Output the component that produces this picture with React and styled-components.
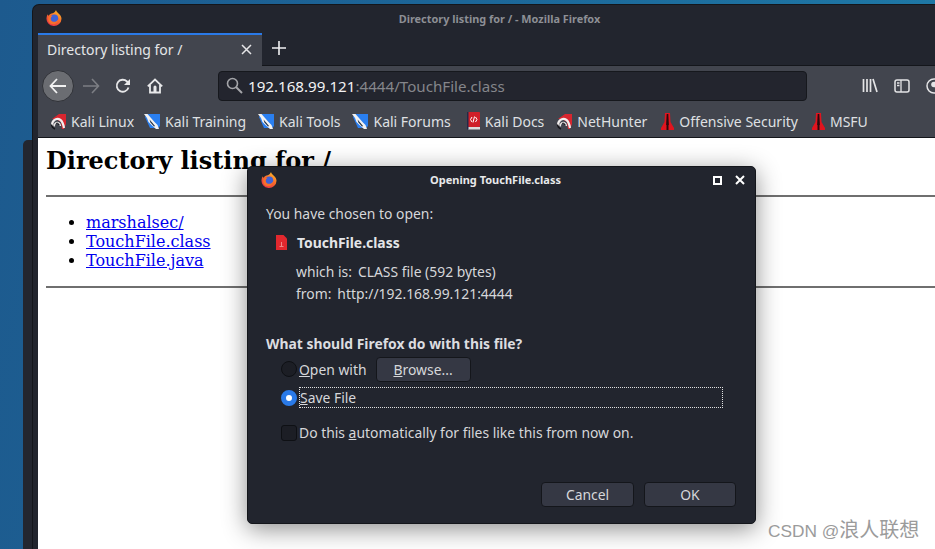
import React from 'react'
import styled, { createGlobalStyle } from 'styled-components'

const ui = `"Noto Sans", "Open Sans", sans-serif`

const FirefoxIcon = ({ id }) => (
  <svg width="16" height="16" viewBox="0 0 16 16">
    <defs>
      <linearGradient id={id} x1="0.8" y1="0" x2="0.2" y2="1">
        <stop offset="0" stopColor="#ffc02a" />
        <stop offset="0.5" stopColor="#f7662a" />
        <stop offset="1" stopColor="#e62f4c" />
      </linearGradient>
    </defs>
    <path d="M10 0c.3 1.500 1.300 2.200 2.300 3.200C14.200 4.800 15.500 6.500 15.500 8.700A7.500 7.300 0 1 1 .6 7.500c.1-1.300.5-2.400 1.100-3.200.1.700.4 1.200.9 1.500C3.500 4.300 5 3.400 6.700 3.200 8.200 2.800 9.500 1.600 10 0z" fill={`url(#${id})`} />
    <circle cx="8.300" cy="8.300" r="3.900" fill="#3f62d8" />
    <path d="M2.600 6.800c1.500-1 3-1.200 4.300-.7-1.300.3-2.200 1.300-2.200 2.600 0 1.900 1.600 3.200 3.600 3.100 1.500 0 2.900-.9 3.700-2.300.2 2.600-2.200 4.800-4.800 4.800-3 0-5-2.200-5-4.600 0-1 .1-2 .4-2.900z" fill="#f6702b" />
  </svg>
)

const KaliRed = () => (
  <svg width="17" height="17" viewBox="0 0 17 17">
    <path d="M2 6 9 1h7v10l-2 5H12L11 9 6 6z" fill="#d8262f" />
    <path d="M2.500 13C1 8.500 6 4 10.500 7c2 1.400 2.700 3.500 3.500 8" fill="none" stroke="#f2eeee" strokeWidth="2.200" />
    <path d="M4.500 13.500c-1-2.800 2-5 4.500-3.500 1 .6 1.300 1.500 1.500 3" fill="none" stroke="#e8e4e4" strokeWidth="1.400" />
    <path d="M1.500 11.500c.2 2 1.500 3.800 3.500 4.500" fill="none" stroke="#15151a" strokeWidth="1.500" />
    <path d="M6 10.500c1.200-.8 2.500-.3 3 1.500" fill="none" stroke="#15151a" strokeWidth="1" />
  </svg>
)

const KaliBlue = () => (
  <svg width="17" height="17" viewBox="0 0 17 17">
    <path d="M3 1h13v12l-2 2H6L1 4z" fill="#2a7ff0" />
    <path d="M0 1h3.500l3.500 4 3.500 4 3 3 1.500 4h-3L7.500 12 4.500 9 3 5z" fill="#f2f2f2" />
    <path d="M5.500 6.500l3 3.500 2.500 3-1 .5-3.500-4z" fill="#1a2a40" />
  </svg>
)

const KaliDoc = () => (
  <svg width="18" height="18" viewBox="-3 0 18 18">
    <rect x="1" y="0" width="13" height="15" rx="1" fill="#cf2029" />
    <rect x="2" y="15" width="12" height="2.500" fill="#dcdcdc" />
    <rect x="1" y="0" width="1.500" height="17.500" fill="#222a4a" />
    <path d="M6 5 4.500 7.500 6 10M9.500 5 11 7.500 9.500 10" fill="none" stroke="#fff" strokeWidth="1" />
    <path d="M8.500 4.500 7 10.500" stroke="#fff" strokeWidth="1" />
  </svg>
)

const Rocket = () => (
  <svg width="16" height="19" viewBox="-1 0 16 19">
    <path d="M5 1h5l.5 9 3.500 6v2H1v-2l3.500-6z" fill="#e0141e" />
    <path d="M6.700 2h1.600l.6 11H6.100zM6.500 13h2v5h-2z" fill="#2a0a0e" />
  </svg>
)

const FileIcon = () => (
  <svg width="11" height="15" viewBox="0 0 11 15">
    <path d="M0 0h7.500L11 3.500V15H0z" fill="#e2282e" />
    <path d="M5.500 7v4M3.500 11.500h4" stroke="#f08888" strokeWidth="1" />
  </svg>
)

const bookmarks = [
  { label: 'Kali Linux', icon: <KaliRed /> },
  { label: 'Kali Training', icon: <KaliBlue /> },
  { label: 'Kali Tools', icon: <KaliBlue /> },
  { label: 'Kali Forums', icon: <KaliBlue /> },
  { label: 'Kali Docs', icon: <KaliDoc /> },
  { label: 'NetHunter', icon: <KaliRed /> },
  { label: 'Offensive Security', icon: <Rocket /> },
  { label: 'MSFU', icon: <Rocket /> },
]

const App = () => {
  return (
    <>
      <Global />
      <Desktop>
        <BackWindow />
        <BrowserWindow>
          <TitleBar>
            <TitleIcon><FirefoxIcon id="fxMain" /></TitleIcon>
            Directory listing for / - Mozilla Firefox
          </TitleBar>
          <Inner>
            <TabStrip>
              <Tab>
                <span>Directory listing for /</span>
                <svg width="11" height="11" viewBox="0 0 11 11"><path d="M1 1l9 9M10 1l-9 9" stroke="#e6e6e8" strokeWidth="1.500" /></svg>
              </Tab>
              <NewTab>
                <svg width="14" height="14" viewBox="0 0 14 14"><path d="M7 0v14M0 7h14" stroke="#f0f0f2" strokeWidth="1.600" /></svg>
              </NewTab>
            </TabStrip>
            <NavBar>
              <BackButton>
                <svg width="18" height="16" viewBox="0 0 18 16"><path d="M8 1 1.500 8 8 15M2 8h15" fill="none" stroke="#f2f2f2" strokeWidth="1.800" /></svg>
              </BackButton>
              <NavIcon $left={8}>
                <svg width="18" height="16" viewBox="0 0 18 16"><path d="M10 1l6.500 7L10 15M16 8H1" fill="none" stroke="#7c7e84" strokeWidth="1.600" /></svg>
              </NavIcon>
              <NavIcon $left={15}>
                <svg width="16" height="16" viewBox="0 0 16 16"><path d="M13.500 9.500A6 6 0 1 1 12 3.500L14 5.500" fill="none" stroke="#e8e8ea" strokeWidth="1.800" /><path d="M15 1v6H9z" fill="#e8e8ea" /></svg>
              </NavIcon>
              <NavIcon $left={16}>
                <svg width="16" height="16" viewBox="0 0 16 16"><path d="M.8 8.300 8 1.500l7.200 6.800M3 7v7.500h10V7" fill="none" stroke="#e8e8ea" strokeWidth="1.800" /><path d="M8 7.500a1.500 1.500 0 0 1 1.500 1.500v5h-3V9A1.500 1.500 0 0 1 8 7.500z" fill="#e8e8ea" /></svg>
              </NavIcon>
              <UrlBar>
                <svg width="17" height="17" viewBox="0 0 17 17"><circle cx="6.500" cy="6.500" r="5" fill="none" stroke="#a4a5a9" strokeWidth="1.600" /><path d="M10 10l6 6" stroke="#a4a5a9" strokeWidth="2" /></svg>
                <UrlText>192.168.99.121<UrlDim>:4444/TouchFile.class</UrlDim></UrlText>
              </UrlBar>
              <NavRight>
                <svg width="16" height="15" viewBox="0 0 16 15"><path d="M1.500 1v13M5 1v13M8.500 1v13M11 1l4 13" stroke="#e4e4e6" strokeWidth="1.700" fill="none" /></svg>
                <svg width="16" height="14" viewBox="0 0 16 14"><rect x="1" y="1" width="14" height="12" rx="2" fill="none" stroke="#e4e4e6" strokeWidth="1.500" /><path d="M7 1v12M3 4h2.500M3 6.500h2.500" stroke="#e4e4e6" strokeWidth="1.300" /></svg>
                <svg width="16" height="16" viewBox="0 0 16 16"><circle cx="8" cy="8" r="7" fill="none" stroke="#e4e4e6" strokeWidth="1.500" /><circle cx="8" cy="6.500" r="2.800" fill="#e4e4e6" /></svg>
              </NavRight>
            </NavBar>
            <BookmarkBar>
              {bookmarks.map((b) => (
                <Bookmark key={b.label}>
                  {b.icon}
                  <span>{b.label}</span>
                </Bookmark>
              ))}
            </BookmarkBar>
            <Page>
              <Heading>Directory listing for /</Heading>
              <Rule />
              <Listing>
                <li><a href="#marshalsec">marshalsec/</a></li>
                <li><a href="#class">TouchFile.class</a></li>
                <li><a href="#java">TouchFile.java</a></li>
              </Listing>
              <Rule />
            </Page>
          </Inner>
        </BrowserWindow>

        <Dialog>
          <DialogTitle>
            <DialogIcon><FirefoxIcon id="fxDialog" /></DialogIcon>
            Opening TouchFile.class
            <DialogControls>
              <svg width="9" height="9" viewBox="0 0 9 9"><rect x="1" y="1" width="7" height="7" fill="none" stroke="#fff" strokeWidth="2" /></svg>
              <svg width="10" height="10" viewBox="0 0 10 10"><path d="M1 1l8 8M9 1l-8 8" stroke="#fff" strokeWidth="2" /></svg>
            </DialogControls>
          </DialogTitle>
          <DialogBody>
            <div>You have chosen to open:</div>
            <FileRow>
              <FileIcon />
              <strong>TouchFile.class</strong>
            </FileRow>
            <FileMeta>
              <MetaRow><span>which is:</span><span>CLASS file (592 bytes)</span></MetaRow>
              <MetaRow><span>from:</span><span>http://192.168.99.121:4444</span></MetaRow>
            </FileMeta>
            <Question>What should Firefox do with this file?</Question>
            <OptionRow $height={32}>
              <Radio />
              <OptionLabel><u>O</u>pen with</OptionLabel>
              <BrowseButton><u>B</u>rowse...</BrowseButton>
            </OptionRow>
            <OptionRow $height={21} $top={2}>
              <Radio $checked />
              <FocusLabel><u>S</u>ave File</FocusLabel>
            </OptionRow>
            <CheckRow>
              <CheckBox />
              <OptionLabel>Do this <u>a</u>utomatically for files like this from now on.</OptionLabel>
            </CheckRow>
            <ButtonRow>
              <DialogButton $width={93}>Cancel</DialogButton>
              <DialogButton $width={92}>OK</DialogButton>
            </ButtonRow>
          </DialogBody>
        </Dialog>

        <Watermark>CSDN @<WatermarkName>浪人联想</WatermarkName></Watermark>
      </Desktop>
    </>
  )
}

export default App

const Global = createGlobalStyle`
  html, body {
    margin: 0;
    padding: 0;
    overflow: hidden;
  }
`

const Desktop = styled.div`
  position: relative;
  width: 935px;
  height: 549px;
  overflow: hidden;
  font-family: ${ui};
  background: linear-gradient(100deg, #1d5a8e 0%, #1c6698 45%, #1f7ba8 100%);
`

const BackWindow = styled.div`
  position: absolute;
  left: 23px;
  top: 140px;
  width: 20px;
  height: 409px;
  background: #23262f;
  border-radius: 5px 0 0 0;
`

const BrowserWindow = styled.div`
  position: absolute;
  left: 33px;
  top: 5px;
  width: 933px;
  height: 544px;
  background: #22252e;
  border-radius: 6px 0 0 0;
  display: flex;
  flex-direction: column;
  box-shadow: 0 0 0 1px #14161b;
`

const TitleBar = styled.div`
  position: relative;
  height: 28px;
  flex: none;
  display: flex;
  align-items: center;
  justify-content: center;
  padding-bottom: 2px;
  box-sizing: border-box;
  color: #8d8f95;
  font-size: 10.9px;
  font-weight: 700;
`

const TitleIcon = styled.div`
  position: absolute;
  left: 13px;
  top: 5px;
  line-height: 0;
`

const Inner = styled.div`
  flex: 1;
  display: flex;
  flex-direction: column;
  margin-left: 5px;
  min-height: 0;
`

const TabStrip = styled.div`
  height: 32px;
  flex: none;
  display: flex;
  align-items: stretch;
  border-bottom: 1px solid #14161b;
`

const Tab = styled.div`
  width: 224px;
  box-sizing: border-box;
  height: 33px;
  border-top: 2px solid #2a7ae8;
  background: #42454e;
  display: flex;
  align-items: center;
  justify-content: space-between;
  padding: 0 10px 3px 9px;
  color: #e4e5e8;
  font-size: 14px;
`

const NewTab = styled.div`
  width: 34px;
  display: flex;
  align-items: center;
  justify-content: center;
  padding-bottom: 2px;
`

const NavBar = styled.div`
  height: 39px;
  flex: none;
  display: flex;
  align-items: center;
  background: #42454e;
  padding-left: 4px;
`

const BackButton = styled.div`
  width: 32px;
  height: 32px;
  box-sizing: border-box;
  flex: none;
  border-radius: 50%;
  background: #6b6d72;
  border: 1px solid #303238;
  display: flex;
  align-items: center;
  justify-content: center;
`

const NavIcon = styled.div`
  margin-left: ${(p) => p.$left}px;
  line-height: 0;
  flex: none;
`

const UrlBar = styled.div`
  width: 589px;
  height: 30px;
  box-sizing: border-box;
  margin-left: 55px;
  flex: none;
  display: flex;
  align-items: center;
  gap: 5px;
  padding-left: 7px;
  background: #23252e;
  border: 1px solid #16181d;
  border-radius: 4px;
`

const UrlText = styled.div`
  color: #f2f2f4;
  font-size: 15.15px;
  line-height: 20px;
`

const UrlDim = styled.span`
  color: #85868b;
`

const NavRight = styled.div`
  margin-left: 55px;
  display: flex;
  align-items: center;
  gap: 16px;
  flex: none;
`

const BookmarkBar = styled.div`
  height: 33px;
  box-sizing: border-box;
  flex: none;
  display: flex;
  align-items: center;
  gap: 12px;
  padding-left: 12px;
  background: #42454e;
  border-bottom: 1px solid #14161b;
`

const Bookmark = styled.div`
  display: flex;
  align-items: center;
  gap: 4px;
  color: #dfe0e3;
  font-size: 14px;
  white-space: nowrap;
  &:first-child {
    margin-right: -2px;
  }
`

const Page = styled.div`
  flex: 1;
  background: #fff;
  padding: 0 8px;
  font-family: "DejaVu Serif", serif;
  font-size: 16px;
  color: #000;
`

const Heading = styled.h1`
  font-size: 24px;
  line-height: 28px;
  font-weight: 700;
  margin: 9px 0 20px;
`

const Rule = styled.hr`
  margin: 0;
  height: 2px;
  border: none;
  background: #6f6f6f;
`

const Listing = styled.ul`
  margin: 16px 0 16px;
  padding-left: 40px;
  line-height: 19px;
  a {
    color: #0000ee;
  }
`

const Dialog = styled.div`
  position: absolute;
  left: 247px;
  top: 166px;
  width: 509px;
  height: 358px;
  box-sizing: border-box;
  background: #22252e;
  border: 1px solid #14161b;
  border-radius: 5px;
  box-shadow: 0 5px 24px rgba(0, 0, 0, 0.45);
  color: #d6d7da;
  font-size: 13.9px;
  display: flex;
  flex-direction: column;
`

const DialogTitle = styled.div`
  position: relative;
  height: 27px;
  box-sizing: border-box;
  flex: none;
  display: flex;
  align-items: center;
  justify-content: center;
  padding: 0 12px 2px 0;
  color: #e8e9eb;
  font-size: 11px;
  font-weight: 700;
`

const DialogIcon = styled.div`
  position: absolute;
  left: 13px;
  top: 5px;
  line-height: 0;
`

const DialogControls = styled.div`
  position: absolute;
  right: 10px;
  top: 8px;
  display: flex;
  align-items: center;
  gap: 13px;
`

const DialogBody = styled.div`
  flex: 1;
  display: flex;
  flex-direction: column;
  padding: 10px 18px 16px;
  line-height: 19px;
`

const FileRow = styled.div`
  display: flex;
  align-items: center;
  gap: 10px;
  margin: 10px 0 0 10px;
  color: #e4e5e8;
  strong {
    font-weight: 700;
  }
`

const FileMeta = styled.div`
  margin: 10px 0 0 30px;
  display: flex;
  flex-direction: column;
  gap: 3px;
`

const MetaRow = styled.div`
  display: flex;
  gap: 6px;
`

const Question = styled.div`
  margin-top: 31px;
  font-weight: 700;
  color: #dcdde0;
`

const OptionRow = styled.div`
  height: ${(p) => p.$height}px;
  margin: ${(p) => p.$top || 0}px 0 0 15px;
  display: flex;
  align-items: center;
`

const Radio = styled.div`
  width: 16px;
  height: 16px;
  box-sizing: border-box;
  flex: none;
  border-radius: 50%;
  margin-right: 2px;
  border: ${(p) => (p.$checked ? '5px solid #2a7ae8' : '1px solid #0e1014')};
  background: ${(p) => (p.$checked ? '#fff' : '#1c1e25')};
`

const OptionLabel = styled.span`
  white-space: nowrap;
`

const FocusLabel = styled.span`
  flex: 1;
  height: 21px;
  margin-right: 14px;
  box-sizing: border-box;
  border: 1px dotted #e0e0e0;
  line-height: 19px;
`

const BrowseButton = styled.div`
  width: 95px;
  height: 25px;
  box-sizing: border-box;
  margin-left: 9px;
  display: flex;
  align-items: center;
  justify-content: center;
  background: #353844;
  border: 1px solid #14161b;
  border-radius: 4px;
  color: #d6d7da;
`

const CheckRow = styled.div`
  margin: 15px 0 0 15px;
  display: flex;
  align-items: center;
  gap: 2px;
`

const CheckBox = styled.div`
  width: 16px;
  height: 16px;
  box-sizing: border-box;
  flex: none;
  border: 1px solid #0e1014;
  border-radius: 3px;
  background: #1c1e25;
`

const ButtonRow = styled.div`
  margin-top: auto;
  display: flex;
  justify-content: flex-end;
  gap: 10px;
  padding-right: 1px;
`

const DialogButton = styled.div`
  width: ${(p) => p.$width}px;
  height: 25px;
  box-sizing: border-box;
  display: flex;
  align-items: center;
  justify-content: center;
  background: #353844;
  border: 1px solid #14161b;
  border-radius: 4px;
  color: #d6d7da;
`

const Watermark = styled.div`
  position: absolute;
  left: 768px;
  top: 517px;
  color: #9b9b9b;
  font-size: 17.3px;
  line-height: 26px;
  font-family: "Liberation Sans", "Noto Sans CJK SC", sans-serif;
  white-space: nowrap;
`

const WatermarkName = styled.span`
  font-size: 20px;
`
